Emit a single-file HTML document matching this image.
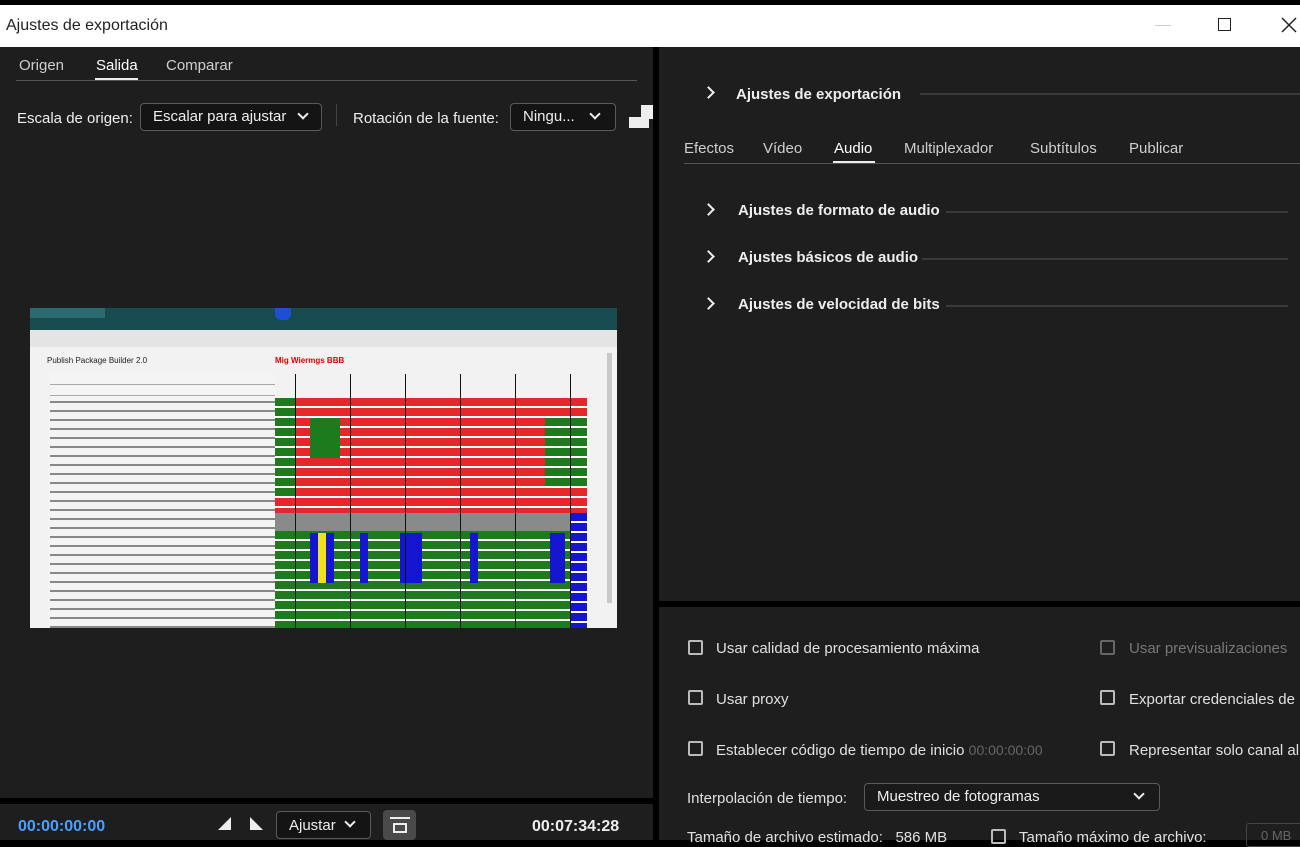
<!DOCTYPE html>
<html><head><meta charset="utf-8"><style>
*{margin:0;padding:0;box-sizing:border-box}
body{width:1300px;height:840px;overflow:hidden;background:#000;font-family:"Liberation Sans",sans-serif;color:#d8d8d8;font-size:15px;position:relative}
.a{position:absolute;white-space:nowrap}
.panel{position:absolute;background:#1e1e1e}
.dd{position:absolute;border:1px solid #5a5a5a;border-radius:4px;background:#141414;color:#eee;padding:0 12px;line-height:26px}
.chev{position:absolute;width:8px;height:8px;border-right:2px solid #eee;border-bottom:2px solid #eee;transform:rotate(45deg)}
.rchev{position:absolute;width:9px;height:9px;border-right:2px solid #eee;border-bottom:2px solid #eee;transform:rotate(-45deg)}
.cb{position:absolute;width:15px;height:15px;border:2px solid #bbb;border-radius:2px}
.hd{font-weight:bold;color:#eee}
.line{position:absolute;height:2px;background:#3a3a3a}
</style></head><body>
<!-- title bar -->
<div class="a" style="left:0;top:5px;width:1300px;height:42px;background:#fff"></div>
<div class="a" style="left:6px;top:17px;color:#222;font-size:16px">Ajustes de exportación</div>
<div class="a" style="left:1155px;top:25px;width:16px;height:1px;background:#ccc"></div>
<div class="a" style="left:1218px;top:18px;width:13px;height:13px;border:1.5px solid #222"></div>
<svg class="a" style="left:1281px;top:17px" width="16" height="16"><path d="M1 1L15 15M15 1L1 15" stroke="#222" stroke-width="1.5"/></svg>

<!-- left panel -->
<div class="panel" style="left:0;top:47px;width:653px;height:751px"></div>
<div class="a" style="left:19px;top:57px;color:#cfcfcf">Origen</div>
<div class="a" style="left:96px;top:57px;color:#fff">Salida</div>
<div class="a" style="left:166px;top:57px;color:#cfcfcf">Comparar</div>
<div class="a" style="left:16px;top:80px;width:621px;height:1px;background:#555"></div>
<div class="a" style="left:95px;top:78px;width:43px;height:2px;background:#eee"></div>
<div class="a" style="left:17px;top:110px;color:#eee">Escala de origen:</div>
<div class="dd" style="left:140px;top:103px;width:182px;height:28px">Escalar para ajustar</div>
<div class="chev" style="left:299px;top:110px"></div>
<div class="a" style="left:336px;top:104px;width:1px;height:22px;background:#444"></div>
<div class="a" style="left:353px;top:110px;color:#eee">Rotación de la fuente:</div>
<div class="dd" style="left:510px;top:103px;width:106px;height:28px">Ningu...</div>
<div class="chev" style="left:591px;top:110px"></div>
<div class="a" style="left:629px;top:117px;width:20px;height:11px;background:#eee"></div>
<div class="a" style="left:641px;top:105px;width:12px;height:14px;background:#eee"></div>

<!-- thumbnail -->
<div class="a" style="left:30px;top:308px;width:587px;height:320px;background:#f2f2f2;overflow:hidden">
 <div class="a" style="left:0;top:0;width:587px;height:22px;background:#184b50"></div>
 <div class="a" style="left:0;top:0;width:75px;height:10px;background:#2b6a6e"></div>
 <div class="a" style="left:245px;top:0;width:16px;height:12px;background:#1f4fd0;border-radius:0 0 6px 6px"></div>
 <div class="a" style="left:0;top:22px;width:587px;height:17px;background:#e4e4e4"></div>
 <div class="a" style="left:17px;top:48px;font-size:8px;color:#222">Publish Package Builder 2.0</div>
 <div class="a" style="left:245px;top:48px;font-size:8px;color:#d00;font-weight:bold">Mig Wiermgs BBB</div>
 <div class="a" style="left:20px;top:66px;width:225px;height:24px;background:repeating-linear-gradient(#f4f4f4 0 10px,#aaa 10px 11px)"></div>
 <div class="a" style="left:20px;top:90px;width:225px;height:230px;background:repeating-linear-gradient(#f4f4f4 0 3px,#888 3px 5px,#f4f4f4 5px 9px)"></div>
 <div class="a" style="left:245px;top:90px;width:312px;height:115px;background:repeating-linear-gradient(#e5262a 0 8px,#fff 8px 10px)"></div>
 <div class="a" style="left:245px;top:90px;width:20px;height:100px;background:repeating-linear-gradient(#1d7a1d 0 8px,#fff 8px 10px)"></div>
 <div class="a" style="left:280px;top:110px;width:30px;height:40px;background:#1d7a1d"></div>
 <div class="a" style="left:515px;top:110px;width:42px;height:70px;background:repeating-linear-gradient(#1d7a1d 0 8px,#fff 8px 10px)"></div>
 <div class="a" style="left:245px;top:205px;width:312px;height:18px;background:#8a8a8a"></div>
 <div class="a" style="left:245px;top:223px;width:312px;height:97px;background:repeating-linear-gradient(#1d7a1d 0 8px,#fff 8px 10px)"></div>
 <div class="a" style="left:280px;top:225px;width:8px;height:50px;background:#1515d0"></div>
 <div class="a" style="left:288px;top:225px;width:8px;height:50px;background:#f0e020"></div>
 <div class="a" style="left:296px;top:225px;width:8px;height:50px;background:#1515d0"></div>
 <div class="a" style="left:330px;top:225px;width:8px;height:50px;background:#1515d0"></div>
 <div class="a" style="left:370px;top:225px;width:22px;height:50px;background:#1515d0"></div>
 <div class="a" style="left:440px;top:225px;width:8px;height:50px;background:#1515d0"></div>
 <div class="a" style="left:520px;top:225px;width:15px;height:50px;background:#1515d0"></div>
 <div class="a" style="left:540px;top:205px;width:17px;height:115px;background:repeating-linear-gradient(#1515d0 0 8px,#fff 8px 10px)"></div>
 <div class="a" style="left:245px;top:66px;width:312px;height:254px;background:repeating-linear-gradient(90deg,transparent 0 20px,#111 20px 21px,transparent 21px 55px)"></div>
 <div class="a" style="left:577px;top:45px;width:5px;height:250px;background:#c8c8c8"></div>
</div>

<!-- bottom timeline -->
<div class="panel" style="left:0;top:804px;width:653px;height:36px"></div>
<div class="a" style="left:18px;top:818px;color:#4aa0ff;font-size:16px;font-weight:bold">00:00:00:00</div>
<div class="a" style="left:218px;top:817px;width:0;height:0;border-left:13px solid transparent;border-bottom:13px solid #eee"></div>
<div class="a" style="left:250px;top:817px;width:0;height:0;border-right:13px solid transparent;border-bottom:13px solid #eee"></div>
<div class="dd" style="left:276px;top:811px;width:95px;height:28px;line-height:28px">Ajustar</div>
<div class="chev" style="left:346px;top:818px"></div>
<div class="a" style="left:383px;top:810px;width:33px;height:30px;background:#4a4a4a;border-radius:4px"></div>
<div class="a" style="left:393px;top:823px;width:14px;height:10px;border:2px solid #eee"></div>
<div class="a" style="left:390px;top:817px;width:20px;height:2px;background:#eee"></div>
<div class="a" style="left:532px;top:818px;color:#eee;font-size:16px;font-weight:bold">00:07:34:28</div>

<!-- right top panel -->
<div class="panel" style="left:659px;top:47px;width:641px;height:554px"></div>
<div class="rchev" style="left:704px;top:88px"></div>
<div class="a hd" style="left:736px;top:86px">Ajustes de exportación</div>
<div class="line" style="left:920px;top:93px;width:380px"></div>
<div class="a" style="left:684px;top:140px;color:#cfcfcf">Efectos</div>
<div class="a" style="left:763px;top:140px;color:#cfcfcf">Vídeo</div>
<div class="a" style="left:834px;top:140px;color:#fff">Audio</div>
<div class="a" style="left:904px;top:140px;color:#cfcfcf">Multiplexador</div>
<div class="a" style="left:1030px;top:140px;color:#cfcfcf">Subtítulos</div>
<div class="a" style="left:1129px;top:140px;color:#cfcfcf">Publicar</div>
<div class="a" style="left:684px;top:163px;width:616px;height:1px;background:#555"></div>
<div class="a" style="left:833px;top:161px;width:42px;height:2px;background:#eee"></div>
<div class="rchev" style="left:704px;top:205px"></div>
<div class="a hd" style="left:738px;top:202px">Ajustes de formato de audio</div>
<div class="line" style="left:946px;top:211px;width:342px"></div>
<div class="rchev" style="left:704px;top:252px"></div>
<div class="a hd" style="left:738px;top:249px">Ajustes básicos de audio</div>
<div class="line" style="left:922px;top:258px;width:366px"></div>
<div class="rchev" style="left:704px;top:299px"></div>
<div class="a hd" style="left:738px;top:296px">Ajustes de velocidad de bits</div>
<div class="line" style="left:946px;top:305px;width:342px"></div>

<!-- right bottom panel -->
<div class="panel" style="left:659px;top:607px;width:641px;height:233px"></div>
<div class="cb" style="left:688px;top:640px"></div>
<div class="a" style="left:716px;top:640px;color:#e0e0e0">Usar calidad de procesamiento máxima</div>
<div class="cb" style="left:1100px;top:640px;border-color:#666"></div>
<div class="a" style="left:1129px;top:640px;color:#777">Usar previsualizaciones</div>
<div class="cb" style="left:688px;top:690px"></div>
<div class="a" style="left:716px;top:691px;color:#e0e0e0">Usar proxy</div>
<div class="cb" style="left:1100px;top:690px"></div>
<div class="a" style="left:1129px;top:691px;color:#e0e0e0">Exportar credenciales de</div>
<div class="cb" style="left:688px;top:741px"></div>
<div class="a" style="left:716px;top:742px;color:#e0e0e0">Establecer código de tiempo de inicio <span style="color:#666;font-size:14px">00:00:00:00</span></div>
<div class="cb" style="left:1100px;top:741px"></div>
<div class="a" style="left:1129px;top:742px;color:#e0e0e0">Representar solo canal al</div>
<div class="a" style="left:687px;top:790px;color:#e0e0e0">Interpolación de tiempo:</div>
<div class="dd" style="left:864px;top:783px;width:296px;height:28px;background:#1a1a1a">Muestreo de fotogramas</div>
<div class="chev" style="left:1135px;top:790px"></div>
<div class="a" style="left:687px;top:829px;color:#e0e0e0">Tamaño de archivo estimado:&nbsp;&nbsp; 586 MB</div>
<div class="cb" style="left:991px;top:829px"></div>
<div class="a" style="left:1019px;top:829px;color:#e0e0e0">Tamaño máximo de archivo:</div>
<div class="a" style="left:1246px;top:823px;width:60px;height:24px;border:1px solid #444;border-radius:3px;color:#666;font-size:13px;padding:4px 0 0 14px">0 MB</div>
</body></html>
